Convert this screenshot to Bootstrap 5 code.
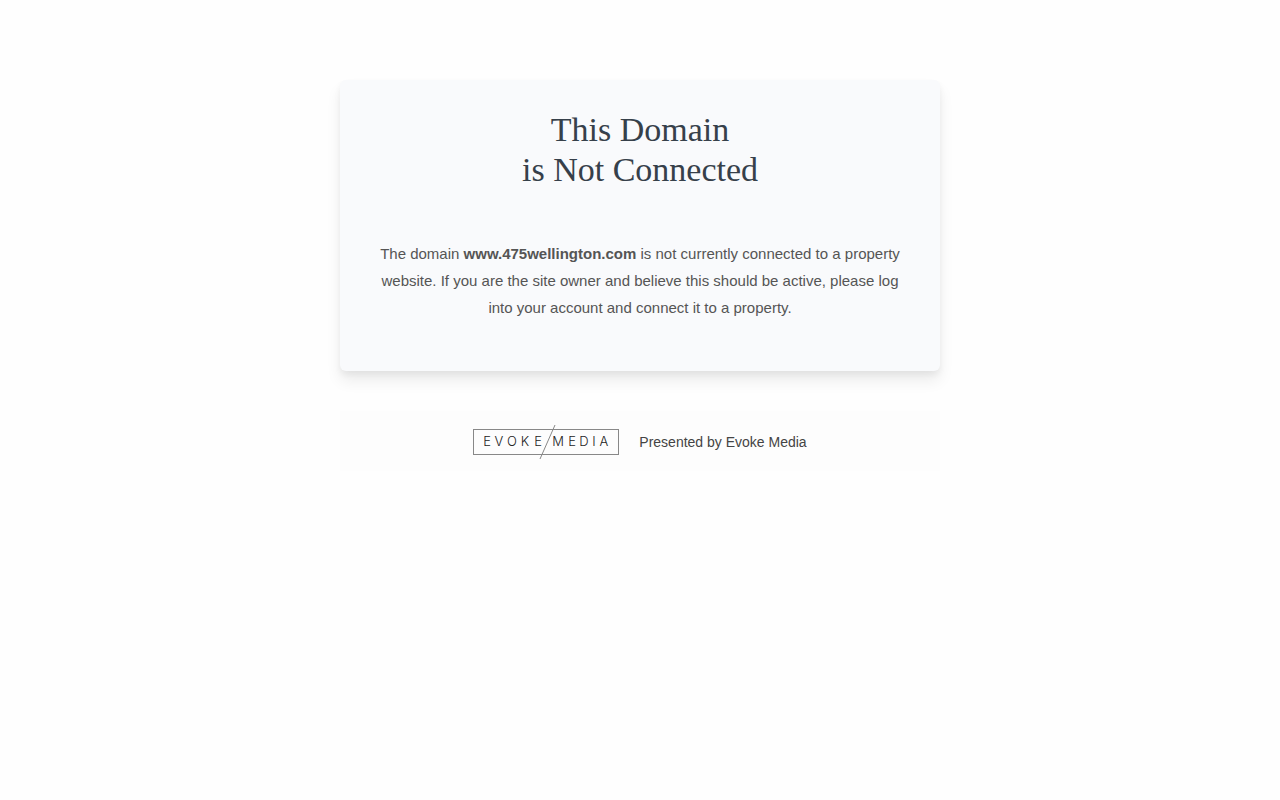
<!DOCTYPE html>
<html lang="en">
<head>
<meta charset="utf-8">
<meta name="viewport" content="width=device-width, initial-scale=1">
<title>This Domain is Not Connected</title>
<link rel="stylesheet" href="https://cdn.jsdelivr.net/npm/bootstrap@5.3.0/dist/css/bootstrap.min.css">
<script src="https://cdn.jsdelivr.net/npm/bootstrap@5.3.0/dist/js/bootstrap.bundle.min.js"></script>
<style>
body { background: #fefefe; font-family: "Liberation Sans", Arial, sans-serif; }
.notice-wrap { max-width: 600px; padding-top: 80px; }
.notice { background: #f9fafc; border-radius: 6px; padding: 30px 40px 50px; box-shadow: 0 10px 15px rgba(0,0,0,.07), 0 4px 6px rgba(0,0,0,.05); }
.notice h1 { font: 400 34px/40px "Liberation Serif", "Times New Roman", serif; color: #36404a; margin-bottom: 50px; }
.notice p { font-size: 15px; line-height: 27px; color: #555; }
.presenter { margin-top: 40px; height: 60px; padding-top: 2px; gap: 20px; background: #fdfdfd; font-size: 14px; line-height: 22px; color: #444; }
.brand-logo text { font: 300 13px Inter, sans-serif; fill: #222; text-anchor: middle; }
</style>
</head>
<body>
<main class="container-fluid notice-wrap px-0">
  <section class="notice text-center">
    <h1>This Domain<br>is Not Connected</h1>
    <p class="mb-0">The domain <strong>www.475wellington.com</strong> is not currently connected to a property website. If you are the site owner and believe this should be active, please log into your account and connect it to a property.</p>
  </section>
  <footer class="presenter d-flex align-items-center justify-content-center">
    <svg class="brand-logo" width="146" height="36" viewBox="0 0 146 36" role="img" aria-label="Evoke Media">
      <rect x=".5" y="5.5" width="145" height="25" fill="none" stroke="#888"/>
      <path d="M82 1 67 35" stroke="#888"/>
      <text x="14 26 39 52 65" y="22">EVOKE</text>
      <text x="85 99 111 121 131" y="22">MEDIA</text>
    </svg>
    <span>Presented by Evoke Media</span>
  </footer>
</main>
</body>
</html>
